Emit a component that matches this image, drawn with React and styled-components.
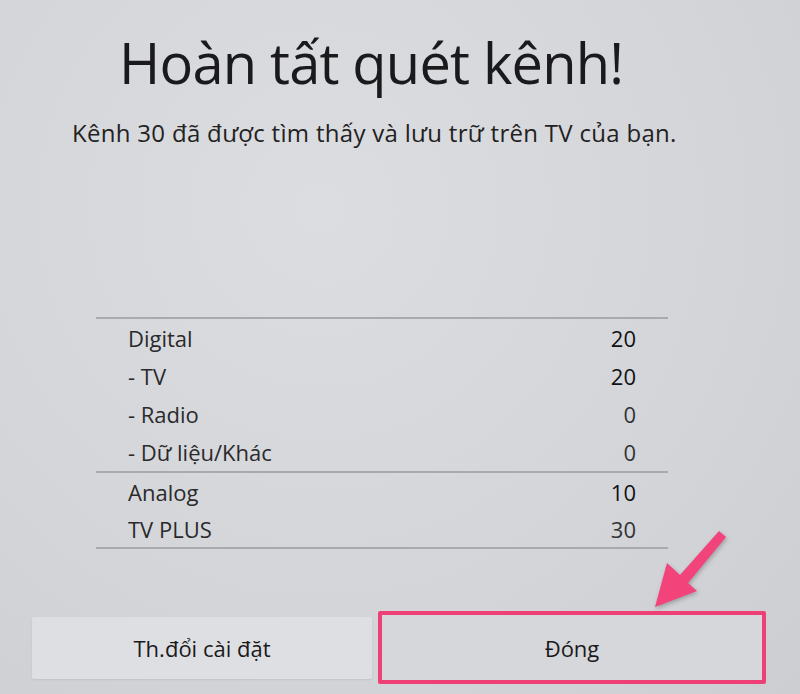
import React from 'react';
import styled, { createGlobalStyle } from 'styled-components';

const GlobalStyle = createGlobalStyle`
  html, body {
    margin: 0;
    padding: 0;
  }
  body {
    background: #d5d6da;
    font-family: 'Open Sans', 'Noto Sans', sans-serif;
    color: #1c1c1e;
  }
`;

const rows = [
  { label: 'Digital', value: '20', strong: true },
  { label: '- TV', value: '20', strong: true },
  { label: '- Radio', value: '0' },
  { label: '- Dữ liệu/Khác', value: '0' },
];

const extraRows = [
  { label: 'Analog', value: '10', strong: true },
  { label: 'TV PLUS', value: '30' },
];

const Screen = styled.main`
  position: relative;
  width: 800px;
  height: 694px;
  overflow: hidden;
  background: radial-gradient(ellipse at 40% 30%, #dcdde1 0%, #d4d5d9 60%, #cdced2 100%);
  display: flex;
  flex-direction: column;
`;

const Title = styled.h1`
  margin: 26px 0 0 119px;
  font-size: 56px;
  font-weight: 400;
  line-height: 72px;
  letter-spacing: -0.8px;
  color: #1a1a1c;
`;

const Subtitle = styled.p`
  margin: 20px 0 0 72px;
  font-size: 24px;
  line-height: 30px;
  font-weight: 400;
  letter-spacing: 0.3px;
  color: #222;
`;

const Table = styled.section`
  margin: 169px 0 0 96px;
  width: 572px;
  border-top: 2px solid #a9aaae;
  border-bottom: 2px solid #a9aaae;
`;

const Group = styled.div`
  padding: 0 32px;
  & + & {
    border-top: 2px solid #a9aaae;
  }
`;

const Row = styled.div`
  display: flex;
  justify-content: space-between;
  align-items: center;
  height: ${(p) => (p.compact ? '37px' : '38px')};
  font-size: 22px;
  color: #2a2a2c;
`;

const Value = styled.span`
  color: ${(p) => (p.strong ? '#111' : '#333')};
  font-weight: ${(p) => (p.strong ? 500 : 400)};
`;

const Buttons = styled.div`
  display: flex;
  align-items: center;
  gap: 6px;
  margin: 62px 0 0 32px;
`;

const Button = styled.button`
  font-family: 'Open Sans', 'Noto Sans', sans-serif;
  font-size: 22px;
  font-weight: 500;
  color: #1a1a1c;
  cursor: pointer;
  box-sizing: border-box;
  width: ${(p) => (p.focused ? '388px' : '340px')};
  height: ${(p) => (p.focused ? '73px' : '62px')};
  background: ${(p) => (p.focused ? '#d6d7db' : '#dedfe2')};
  border: ${(p) => (p.focused ? '4px solid #ee3f77' : 'none')};
  border-radius: 2px;
  box-shadow: ${(p) => (p.focused ? 'none' : '0 1px 2px rgba(0,0,0,0.08)')};
`;

const Arrow = styled.svg`
  position: absolute;
  left: 0;
  top: 0;
  pointer-events: none;
  filter: drop-shadow(1px 2px 2px rgba(0, 0, 0, 0.25));
`;

export default function App() {
  return (
    <>
      <GlobalStyle />
      <Screen>
        <Title>Hoàn tất quét kênh!</Title>
        <Subtitle>Kênh 30 đã được tìm thấy và lưu trữ trên TV của bạn.</Subtitle>
        <Table>
          <Group>
            {rows.map((r) => (
              <Row key={r.label}>
                <span>{r.label}</span>
                <Value strong={r.strong}>{r.value}</Value>
              </Row>
            ))}
          </Group>
          <Group>
            {extraRows.map((r) => (
              <Row compact key={r.label}>
                <span>{r.label}</span>
                <Value strong={r.strong}>{r.value}</Value>
              </Row>
            ))}
          </Group>
        </Table>
        <Buttons>
          <Button>Th.đổi cài đặt</Button>
          <Button focused>Đóng</Button>
        </Buttons>
        <Arrow width="800" height="694" viewBox="0 0 800 694">
          <polygon
            points="655,607 667,563 680,575 719,531 726,537 688,583 697,591"
            fill="#f2437b"
          />
        </Arrow>
      </Screen>
    </>
  );
}
